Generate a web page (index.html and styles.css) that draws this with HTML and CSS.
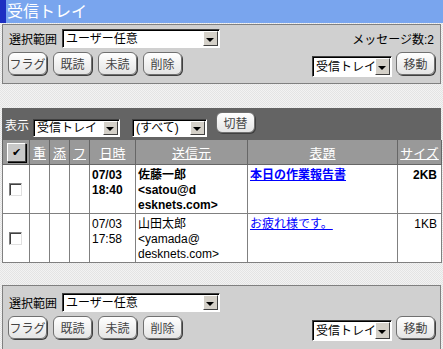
FILE: index.html
```html
<!DOCTYPE html>
<html lang="ja">
<head>
  <meta charset="UTF-8" />
  <title>受信トレイ</title>
  <link rel="stylesheet" href="styles.css">
</head>
<body>
  <h1 class="titlebar">受信トレイ</h1>

  <form class="panel">
    <div class="row">
      <label class="field">選択範囲
        <span class="combo range"><select><option>ユーザー任意</option></select></span>
      </label>
      <span class="count">メッセージ数:2</span>
    </div>
    <div class="row">
      <div class="btns">
        <button type="button">フラグ</button>
        <button type="button">既読</button>
        <button type="button">未読</button>
        <button type="button">削除</button>
      </div>
      <div class="move">
        <span class="combo folder"><select><option>受信トレイ</option></select></span>
        <button type="button">移動</button>
      </div>
    </div>
  </form>

  <div class="list">
    <div class="filter">
      <span>表示</span>
      <span class="combo view"><select><option>受信トレイ</option></select></span>
      <span class="combo kind"><select><option>(すべて)</option></select></span>
      <button type="button">切替</button>
    </div>
    <table class="mails">
      <colgroup>
        <col style="width:27px"><col style="width:20px"><col style="width:20px"><col style="width:20px">
        <col style="width:46px"><col style="width:112px"><col style="width:150px"><col style="width:44px">
      </colgroup>
      <thead>
        <tr>
          <th><span class="allcheck">&#10004;</span></th>
          <th><a href="#">重</a></th>
          <th><a href="#">添</a></th>
          <th><a href="#">フ</a></th>
          <th><a href="#">日時</a></th>
          <th><a href="#">送信元</a></th>
          <th><a href="#">表題</a></th>
          <th><a href="#">サイズ</a></th>
        </tr>
      </thead>
      <tbody>
        <tr class="unread">
          <td class="chk"><input type="checkbox"></td>
          <td></td><td></td><td></td>
          <td>07/03<br>18:40</td>
          <td>佐藤一郎<br><span class="addr">&lt;satou@d<br>esknets.com&gt;</span></td>
          <td><a href="#">本日の作業報告書</a></td>
          <td class="size">2KB</td>
        </tr>
        <tr>
          <td class="chk"><input type="checkbox"></td>
          <td></td><td></td><td></td>
          <td>07/03<br>17:58</td>
          <td>山田太郎<br><span class="addr">&lt;yamada@<br>desknets.com&gt;</span></td>
          <td><a href="#">お疲れ様です。</a></td>
          <td class="size">1KB</td>
        </tr>
      </tbody>
    </table>
  </div>

  <form class="panel bottom">
    <div class="row">
      <label class="field">選択範囲
        <span class="combo range"><select><option>ユーザー任意</option></select></span>
      </label>
    </div>
    <div class="row">
      <div class="btns">
        <button type="button">フラグ</button>
        <button type="button">既読</button>
        <button type="button">未読</button>
        <button type="button">削除</button>
      </div>
      <div class="move">
        <span class="combo folder"><select><option>受信トレイ</option></select></span>
        <button type="button">移動</button>
      </div>
    </div>
  </form>
</body>
</html>
```

FILE: styles.css
```css
body {
  margin: 0;
  font-family: "Liberation Sans", "Noto Sans CJK JP", sans-serif;
  font-size: 12px;
  color: #000;
  background: repeating-conic-gradient(#f3f3f3 0 25%, #e4e4e4 0 50%) 0 0 / 2px 2px;
}

.titlebar {
  margin: 0;
  height: 23px;
  line-height: 23px;
  padding-left: 1px;
  font-size: 16px;
  font-weight: normal;
  color: white;
  background: #79a5ee;
  border-left: 6px solid #1d2fc2;
}

.panel {
  margin: 1px 2px 0;
  padding: 4px 5px 5px 5px;
  height: 49px;
  background: #d0d0d0;
  border: 1px solid #808080;
}

.panel.bottom {
  margin-top: 22px;
  height: 52px;
  padding-top: 7px;
}

.row {
  display: flex;
  justify-content: space-between;
  align-items: center;
}

.row + .row {
  margin-top: 4px;
  align-items: flex-start;
}

.field {
  display: flex;
  align-items: center;
  gap: 5px;
  padding-left: 1px;
}

.count {
  padding-right: 1px;
}

.btns {
  display: flex;
  gap: 6px;
}

.move {
  display: flex;
  gap: 4px;
  align-items: flex-start;
}

.move .combo {
  margin-top: 4px;
}

button {
  height: 23px;
  width: 39px;
  padding: 0;
  font: inherit;
  color: #444;
  background: linear-gradient(#ffffff, #e4e4e4);
  border: 1px solid #707070;
  border-radius: 6px;
  box-shadow: 1px 1px 0 #404040;
  cursor: pointer;
}

.combo {
  position: relative;
  display: inline-block;
  height: 19px;
  background: white;
  border-top: 1px solid #404040;
  border-left: 1px solid #404040;
  border-right: 1px solid #fff;
  border-bottom: 1px solid #fff;
  box-shadow: inset 1px 1px 0 #000;
  box-sizing: border-box;
}

.combo select {
  appearance: none;
  -webkit-appearance: none;
  width: 100%;
  height: 100%;
  border: none;
  background: transparent;
  font: inherit;
  font-size: 12px;
  padding: 0 16px 0 3px;
  line-height: 16px;
  color: #000;
}

/* the drop-down button */
.combo::after {
  content: "";
  position: absolute;
  right: 1px;
  top: 1px;
  bottom: 1px;
  width: 15px;
  background: #d4d0c8;
  border-top: 1px solid #fff;
  border-left: 1px solid #fff;
  border-right: 1px solid #404040;
  border-bottom: 1px solid #404040;
  box-sizing: border-box;
  pointer-events: none;
}

/* its arrow */
.combo::before {
  content: "";
  position: absolute;
  z-index: 1;
  right: 5px;
  top: 50%;
  margin-top: -1px;
  border-left: 4px solid transparent;
  border-right: 4px solid transparent;
  border-top: 4px solid #000;
  pointer-events: none;
}

.range { width: 158px; }
.folder { width: 80px; height: 21px; }
.view { width: 87px; height: 18px; }
.kind { width: 75px; height: 18px; }

.list {
  margin: 24px 2px 0;
}

.filter {
  height: 32px;
  background: #646464;
  color: white;
  display: flex;
  align-items: center;
  gap: 4px;
  padding-left: 3px;
}

.filter .combo {
  margin-top: 7px;
}

.filter .combo.kind {
  margin-left: 8px;
}

.filter button {
  height: 21px;
  margin-left: 5px;
  margin-top: -4px;
}

.mails {
  width: 439px;
  border-collapse: collapse;
  table-layout: fixed;
  background: white;
}

.mails th {
  height: 24px;
  background: #999;
  border: 1px solid #666;
  border-top: none;
  padding: 0;
  font-weight: normal;
  font-size: 13px;
}

.mails th a {
  color: white;
}

.allcheck {
  display: inline-block;
  width: 17px;
  height: 17px;
  line-height: 17px;
  font-size: 11px;
  color: #000;
  background: #c8c8c8;
  border: 1px solid #fff;
  border-right-color: #404040;
  border-bottom-color: #404040;
  box-shadow: 1px 1px 0 #000;
  vertical-align: middle;
}

.mails td {
  height: 44px;
  border: 1px solid #808080;
  padding: 3px 2px 0;
  vertical-align: top;
  line-height: 15px;
  word-break: break-all;
}

.mails td.chk {
  vertical-align: middle;
  text-align: center;
  padding: 0;
}

.mails td.chk input {
  appearance: none;
  -webkit-appearance: none;
  margin: 4px 0 0 -2px;
  width: 13px;
  height: 13px;
  background: white;
  border-top: 1px solid #808080;
  border-left: 1px solid #808080;
  border-right: 1px solid #e0e0e0;
  border-bottom: 1px solid #e0e0e0;
  box-shadow: inset 1px 1px 0 #404040;
}

.mails td a {
  color: #0000ff;
}

.mails td.size {
  text-align: right;
  padding-right: 4px;
}

.unread td {
  font-weight: bold;
}
```
